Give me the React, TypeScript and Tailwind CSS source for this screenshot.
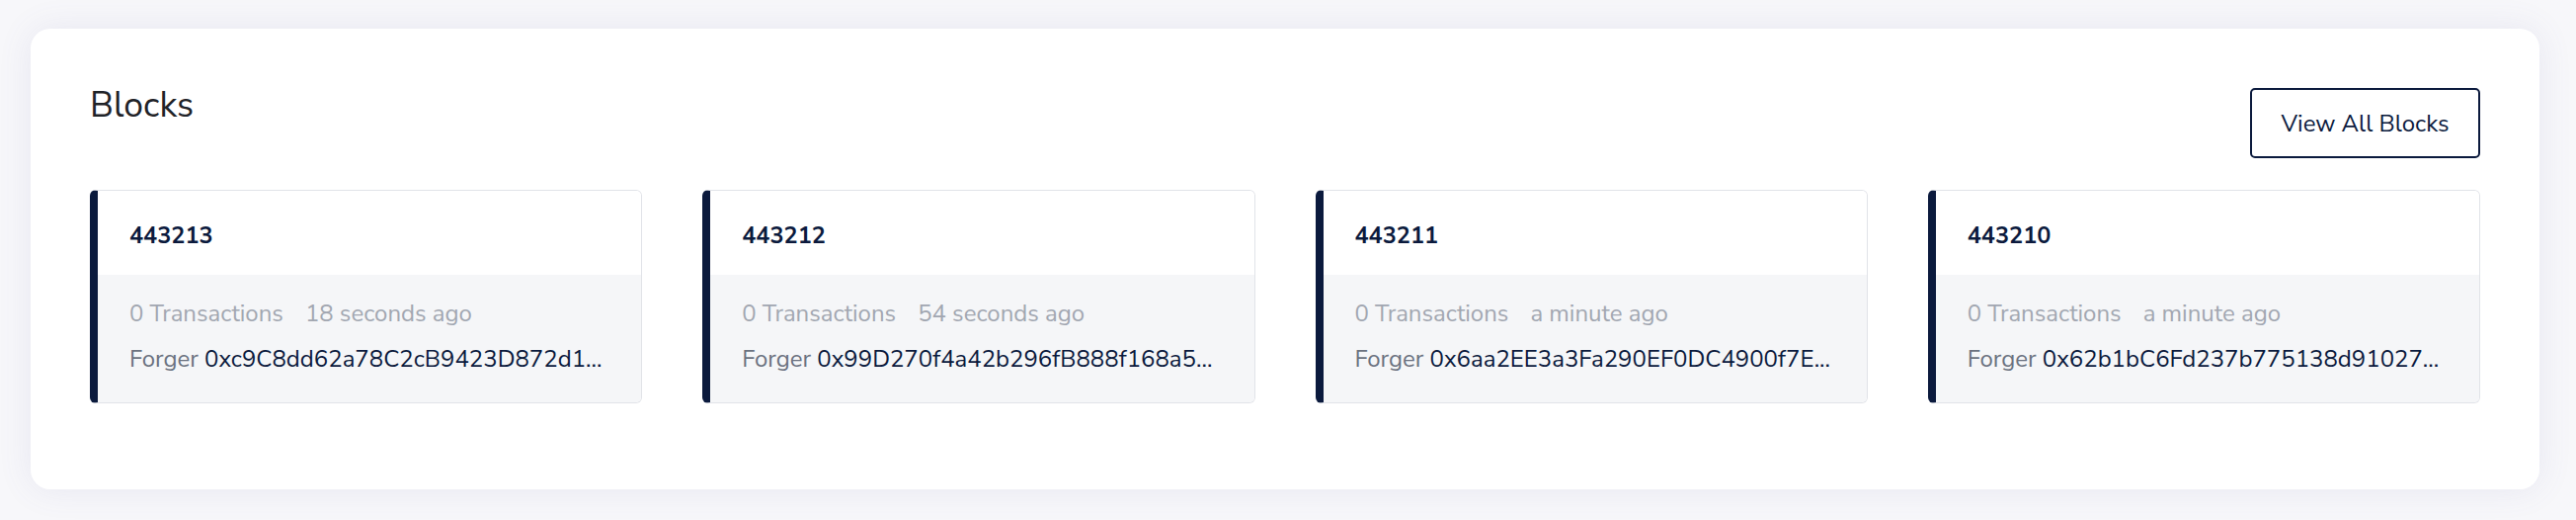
import React from "react";

const blocks = [
  { id: "443213", time: "18 seconds ago", forger: "0xc9C8dd62a78C2cB9423D872d1..." },
  { id: "443212", time: "54 seconds ago", forger: "0x99D270f4a42b296fB888f168a5..." },
  { id: "443211", time: "a minute ago", forger: "0x6aa2EE3a3Fa290EF0DC4900f7E..." },
  { id: "443210", time: "a minute ago", forger: "0x62b1bC6Fd237b775138d91027..." },
];

function BlockCard({ id, time, forger }: { id: string; time: string; forger: string }) {
  return (
    <div className="flex h-[216px] flex-col overflow-hidden rounded-[6px] border border-l-[8px] border-[#e1e3e8] border-l-[#0b1a3d]">
      <div className="flex h-[85px] shrink-0 items-center bg-white pl-[32px] pr-[40px] pt-[6px]">
        <span className="text-[23.5px] font-bold leading-none text-[#0b1a3d]">{id}</span>
      </div>
      <div className="flex flex-1 flex-col bg-[#f5f6f8] pl-[32px] pr-[20px] pt-[25px]">
        <div className="flex gap-[22px] whitespace-nowrap text-[24px] leading-[28px] text-[#a2a7b1]">
          <span>0 Transactions</span>
          <span>{time}</span>
        </div>
        <div className="mt-[18px] whitespace-nowrap text-[24px] leading-[28px] text-[#6b7280]">
          Forger <span className="text-[#0b1a3d]">{forger}</span>
        </div>
      </div>
    </div>
  );
}

export default function App() {
  return (
    <div
      className="h-[526px] w-[2608px] overflow-hidden bg-[#f7f7fa] pl-[31px] pr-[37px] pt-[29px]"
      style={{ fontFamily: '"Nunito Sans", Lato, "Noto Sans", sans-serif' }}
    >
      <div className="rounded-[20px] bg-white px-[60px] pt-[60px] pb-[87px] shadow-[0_0_34px_rgba(100,100,160,0.11)]">
        <div className="flex items-start justify-between">
          <h2 className="text-[35.5px] font-normal leading-none text-[#1f2328]">Blocks</h2>
          <button className="flex h-[71px] w-[233px] items-center justify-center rounded-[5px] border-2 border-[#0b1a3d] text-[24px] text-[#0b1a3d]">
            View All Blocks
          </button>
        </div>
        <div className="mt-[32px] grid grid-cols-4 gap-[61px]">
          {blocks.map((b) => (
            <BlockCard key={b.id} {...b} />
          ))}
        </div>
      </div>
    </div>
  );
}
